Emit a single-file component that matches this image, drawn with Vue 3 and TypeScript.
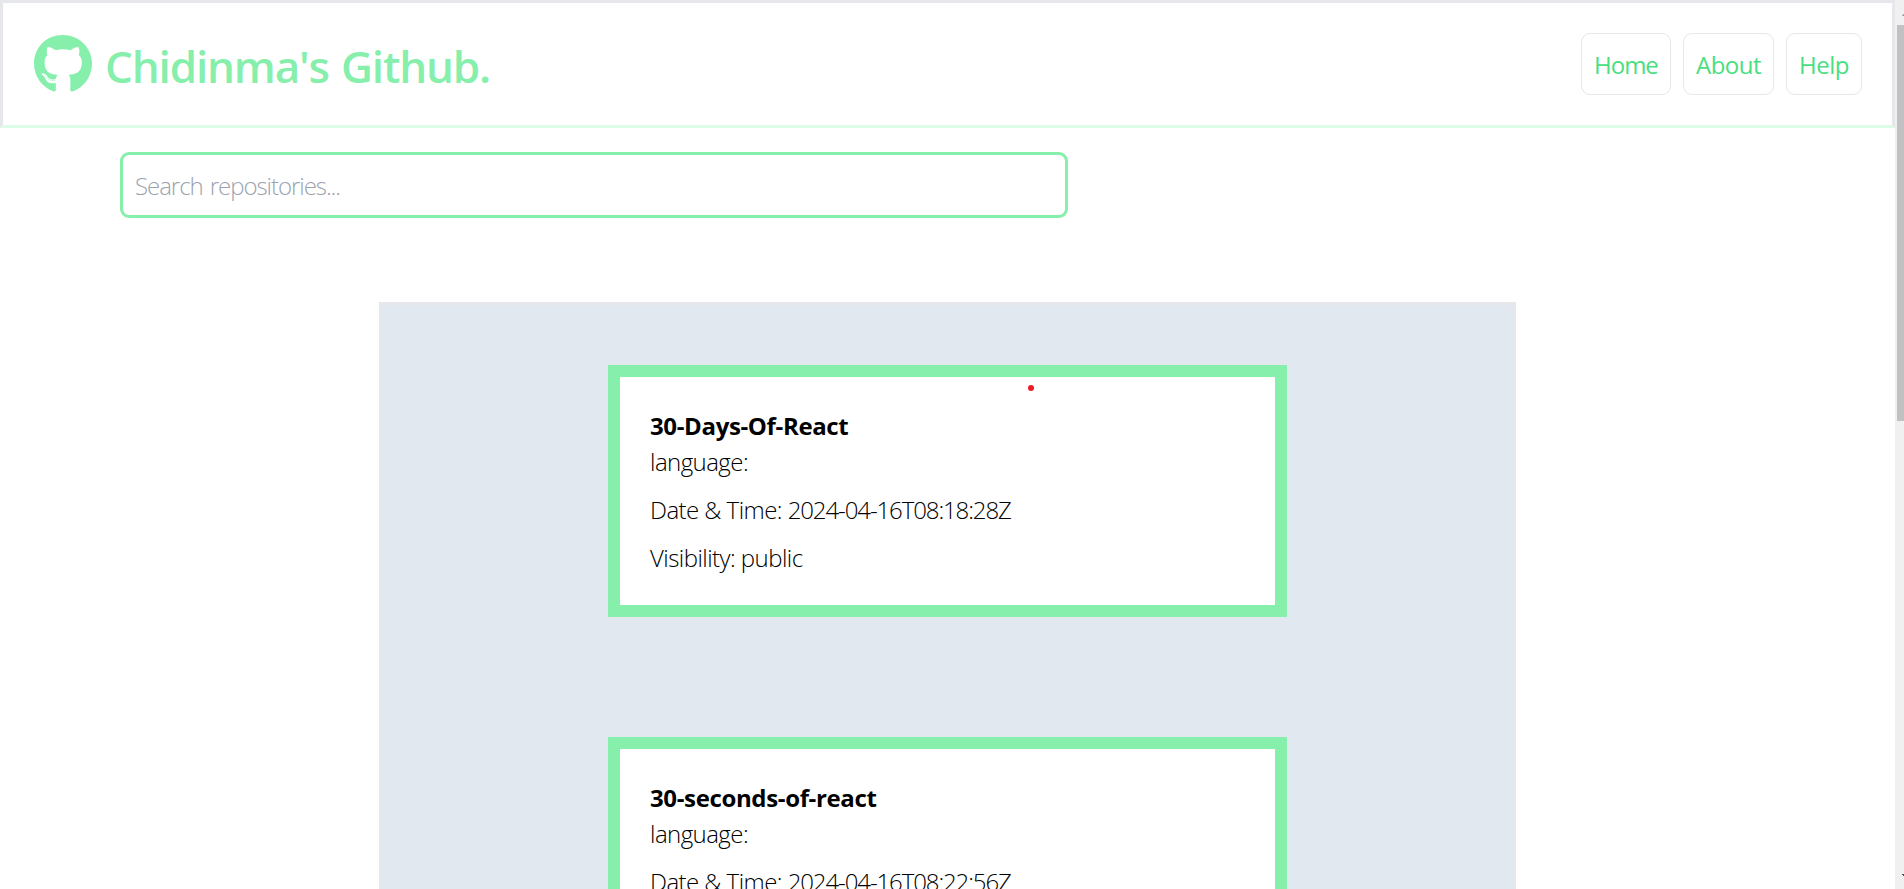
<script setup lang="ts">
interface Repo {
  name: string
  language: string
  created: string
  visibility: string
}

const links: { label: string; key: string }[] = [
  { label: 'Home', key: 'home' },
  { label: 'About', key: 'about' },
  { label: 'Help', key: 'help' },
]

const repos: Repo[] = [
  { name: '30-Days-Of-React', language: '', created: '2024-04-16T08:18:28Z', visibility: 'public' },
  { name: '30-seconds-of-react', language: '', created: '2024-04-16T08:22:56Z', visibility: 'public' },
]
</script>

<template>
  <div class="window">
    <div class="page">
      <header class="header">
        <div class="brand">
          <svg class="logo" viewBox="0 0 496 496" aria-hidden="true">
            <path d="M165.9 389.4c0 2-2.3 3.6-5.2 3.6-3.3.3-5.6-1.3-5.6-3.6 0-2 2.3-3.6 5.2-3.6 3-.3 5.6 1.3 5.6 3.6zm-31.1-4.5c-.7 2 1.3 4.3 4.3 4.9 2.6 1 5.6 0 6.2-2s-1.3-4.3-4.3-5.2c-2.6-.7-5.5.3-6.2 2.3zm44.2-1.7c-2.9.7-4.9 2.6-4.6 4.9.3 2 2.9 3.3 5.9 2.6 2.9-.7 4.9-2.6 4.6-4.6-.3-1.9-3-3.2-5.9-2.9zM244.8 0C106.1 0 0 105.3 0 244c0 110.9 69.8 205.8 169.5 239.2 12.8 2.3 17.3-5.6 17.3-12.1 0-6.2-.3-40.4-.3-61.4 0 0-70 15-84.7-29.8 0 0-11.4-29.1-27.8-36.6 0 0-22.9-15.7 1.6-15.4 0 0 24.9 2 38.6 25.8 21.9 38.6 58.6 27.5 72.9 20.9 2.3-16 8.8-27.1 16-33.7-55.9-6.2-112.3-14.3-112.3-110.5 0-27.5 7.6-41.3 23.6-58.9-2.6-6.5-11.1-33.3 2.6-67.9 20.9-6.5 69 27 69 27 20-5.6 41.5-8.5 62.8-8.5s42.8 2.9 62.8 8.5c0 0 48.1-33.6 69-27 13.7 34.7 5.2 61.4 2.6 67.9 16 17.7 25.8 31.5 25.8 58.9 0 96.5-58.9 104.2-114.8 110.5 9.2 7.9 17 22.9 17 46.4 0 33.7-.3 75.4-.3 83.6 0 6.5 4.6 14.4 17.3 12.1C428.2 449.8 496 354.9 496 244 496 105.3 383.5 0 244.8 0zM97.2 344.9c-1.3 1-1 3.3.7 5.2 1.6 1.6 3.9 2.3 5.2 1 1.3-1 1-3.3-.7-5.2-1.6-1.6-3.9-2.3-5.2-1zm-10.8-8.1c-.7 1.3.3 2.9 2.3 3.9 1.6 1 3.6.7 4.3-.7.7-1.3-.3-2.9-2.3-3.9-2-.6-3.6-.3-4.3.7zm32.4 35.6c-1.6 1.3-1 4.3 1.3 6.2 2.3 2.3 5.2 2.6 6.5 1 1.3-1.3.7-4.3-1.3-6.2-2.2-2.3-5.2-2.6-6.5-1zm-11.4-14.7c-1.6 1-1.6 3.6 0 5.9 1.6 2.3 4.3 3.3 5.6 2.3 1.6-1.3 1.6-3.9 0-6.2-1.4-2.3-4-3.3-5.6-2z" />
          </svg>
          <h1 class="title">Chidinma's Github.</h1>
        </div>
        <nav class="nav">
          <a v-for="link in links" :key="link.key" class="link" :class="link.key"><span>{{ link.label }}</span></a>
        </nav>
      </header>
      <input class="search" type="text" placeholder="Search repositories..." />
      <main class="panel">
        <article v-for="repo in repos" :key="repo.name" class="card">
          <h2 class="name">{{ repo.name }}</h2>
          <p class="line language">language: {{ repo.language }}</p>
          <p class="line">Date &amp; Time: <span class="stamp">{{ repo.created }}</span></p>
          <p class="line">Visibility: {{ repo.visibility }}</p>
        </article>
      </main>
      <i class="pointer"></i>
    </div>
    <div class="scrollbar">
      <i class="arrow up"></i>
      <i class="thumb"></i>
      <i class="arrow down"></i>
    </div>
  </div>
</template>

<style>
body {
  margin: 0;
  overflow: hidden;
  background: #fff;
}
</style>

<style scoped>
* {
  box-sizing: border-box;
}
.window {
  display: flex;
  width: 100%;
  height: 889px;
  overflow: hidden;
  font-family: "Open Sans", "Noto Sans", sans-serif;
  color: #000;
}
.page {
  position: relative;
  flex: 1;
  min-width: 0;
  overflow: hidden;
}
.header {
  display: flex;
  justify-content: space-between;
  align-items: flex-start;
  height: 128px;
  padding: 30px 30px 0 31px;
  border: 3px solid #e5e7eb;
  border-bottom-color: #dcfce7;
}
.brand {
  display: flex;
  gap: 12px;
}
.logo {
  width: 58px;
  height: 58px;
  margin-top: 2px;
  fill: #86efac;
}
.title {
  margin: 4px 0 0 1px;
  font-size: 44px;
  line-height: 58px;
  font-weight: 600;
  letter-spacing: -1.15px;
  word-spacing: 2px;
  color: #86efac;
  white-space: nowrap;
}
.nav {
  display: flex;
  gap: 12px;
}
.link {
  height: 62px;
  padding: 0 0 0 12px;
  border: 1px solid #e5e7eb;
  border-radius: 9px;
  font-size: 24px;
  line-height: 62px;
  letter-spacing: -0.5px;
  color: #4ade80;
  white-space: nowrap;
}
.home {
  width: 90px;
  letter-spacing: -1px;
}
.about {
  width: 91px;
}
.help {
  width: 76px;
}
.search {
  display: block;
  width: 948px;
  height: 66px;
  margin: 24px 0 0 120px;
  padding: 0 12px;
  border: 3px solid #86efac;
  border-radius: 9px;
  outline: none;
  background: #fff;
  font-family: inherit;
  font-size: 24px;
  font-weight: 300;
  letter-spacing: -1.05px;
  word-spacing: 2px;
}
.search::placeholder {
  color: #9ca3af;
  opacity: 1;
}
.panel {
  display: flex;
  flex-direction: column;
  align-items: center;
  gap: 120px;
  width: 1137px;
  margin: 84px 0 0 379px;
  padding: 60px 0;
  border: 3px solid #e5e7eb;
  background: #e2e8f0;
}
.card {
  flex: none;
  width: 679px;
  height: 252px;
  padding: 31px 30px;
  border: 12px solid #86efac;
  background: #fff;
}
.name {
  margin: 0;
  font-size: 24px;
  line-height: 36px;
  font-weight: 700;
  letter-spacing: -0.36px;
  white-space: nowrap;
}
.line {
  margin: 12px 0 0;
  font-size: 24px;
  line-height: 36px;
  font-weight: 300;
  letter-spacing: -0.55px;
  white-space: nowrap;
}
.language {
  margin-top: 0;
}
.stamp {
  letter-spacing: -1.1px;
}
.pointer {
  position: absolute;
  left: 1028px;
  top: 385px;
  width: 6px;
  height: 6px;
  border-radius: 50%;
  background: #ed1c24;
}
.scrollbar {
  display: flex;
  flex-direction: column;
  align-items: flex-end;
  flex: none;
  width: 9px;
  overflow: hidden;
  background: #f0f0f0;
}
.thumb {
  width: 7px;
  height: 396px;
  margin-top: 9px;
  background: #c1c1c1;
}
.arrow {
  width: 2px;
  height: 2px;
  background: #a3a3a3;
}
.up {
  margin-top: 14px;
  clip-path: polygon(50% 0, 100% 0, 100% 100%, 0 100%, 0 50%, 50% 50%);
}
.down {
  margin-top: 453px;
  background: #505050;
  clip-path: polygon(0 0, 100% 0, 100% 100%, 50% 100%, 50% 50%, 0 50%);
}
</style>
